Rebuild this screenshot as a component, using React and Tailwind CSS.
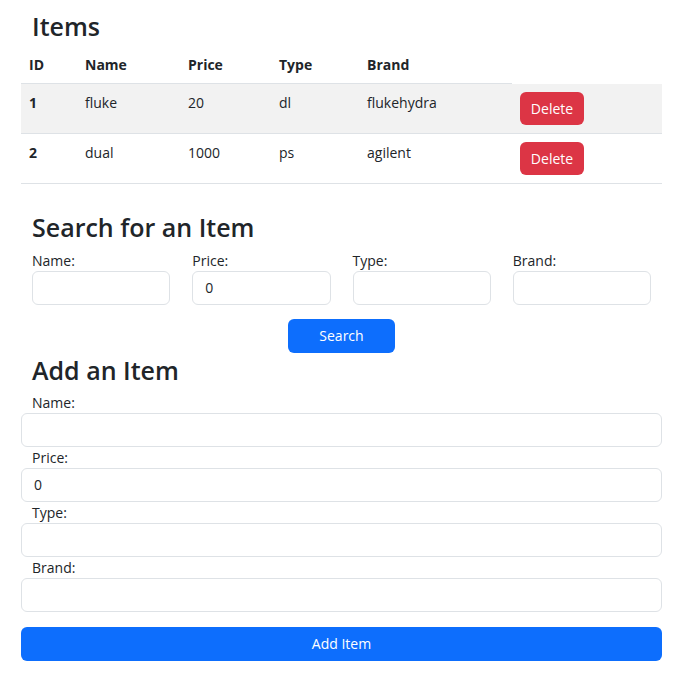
import { useState } from 'react'

const font = { fontFamily: '"Open Sans", "Noto Sans", sans-serif' }

const items = [
  { id: 1, name: 'fluke', price: 20, type: 'dl', brand: 'flukehydra' },
  { id: 2, name: 'dual', price: 1000, type: 'ps', brand: 'agilent' },
]

// ─── Inputs ───────────────────────────────────────────────────────────────────
function Field({ value = '' }) {
  return (
    <input
      type="text"
      defaultValue={value}
      className="block h-[34px] w-full rounded-md border border-[#dee2e6] bg-white px-3 text-[14px] text-[#212529] outline-none"
    />
  )
}

function Heading({ children, className = '' }) {
  return (
    <h2 className={`pl-[11px] text-[25px] font-semibold leading-[31px] text-[#212529] ${className}`}>
      {children}
    </h2>
  )
}

export default function App() {
  const [rows] = useState(items)

  return (
    <div className="min-h-[680px] bg-white px-[21px] pr-[22px] text-[14px] leading-[21px] text-[#212529]" style={font}>
      {/* Items table */}
      <Heading className="pt-[11px]">Items</Heading>
      <table className="mt-[4px] w-full border-collapse text-left">
        <thead>
          <tr>
            <th className="w-[56px] border-b border-[#dee2e6] px-2 py-2 font-bold">ID</th>
            <th className="w-[103px] border-b border-[#dee2e6] px-2 py-2 font-bold">Name</th>
            <th className="w-[91px] border-b border-[#dee2e6] px-2 py-2 font-bold">Price</th>
            <th className="w-[88px] border-b border-[#dee2e6] px-2 py-2 font-bold">Type</th>
            <th className="w-[153px] border-b border-[#dee2e6] px-2 py-2 font-bold">Brand</th>
            <th className="w-[150px]" />
          </tr>
        </thead>
        <tbody>
          {rows.map((r, i) => (
            <tr key={r.id} className={i % 2 === 0 ? 'bg-[#f2f2f2]' : ''}>
              <td className="border-b border-[#dee2e6] px-2 py-2 align-top font-bold">{r.id}</td>
              <td className="border-b border-[#dee2e6] px-2 py-2 align-top">{r.name}</td>
              <td className="border-b border-[#dee2e6] px-2 py-2 align-top">{r.price}</td>
              <td className="border-b border-[#dee2e6] px-2 py-2 align-top">{r.type}</td>
              <td className="border-b border-[#dee2e6] px-2 py-2 align-top">{r.brand}</td>
              <td className="border-b border-[#dee2e6] px-2 py-2 align-top">
                <button className="h-[33px] w-[64px] rounded-md bg-[#dc3545] text-[14px] text-white" style={font}>
                  Delete
                </button>
              </td>
            </tr>
          ))}
        </tbody>
      </table>

      {/* Search */}
      <Heading className="mt-[28px]">Search for an Item</Heading>
      <div className="mt-[7px] grid grid-cols-4">
        {['Name:', 'Price:', 'Type:', 'Brand:'].map((label) => (
          <div key={label} className="px-[11px]">
            <label className="block">{label}</label>
            <Field value={label === 'Price:' ? '0' : ''} />
          </div>
        ))}
      </div>
      <div className="mt-[14px] flex justify-center">
        <button className="h-[34px] w-[107px] rounded-md bg-[#0d6efd] text-[14px] text-white" style={font}>
          Search
        </button>
      </div>

      {/* Add */}
      <Heading className="mt-[2px]">Add an Item</Heading>
      <div className="mt-[6px] flex flex-col">
        {['Name:', 'Price:', 'Type:', 'Brand:'].map((label) => (
          <div key={label}>
            <label className="block pl-[11px]">{label}</label>
            <Field value={label === 'Price:' ? '0' : ''} />
          </div>
        ))}
      </div>
      <button className="mt-[15px] h-[34px] w-full rounded-md bg-[#0d6efd] text-[14px] text-white" style={font}>
        Add Item
      </button>
    </div>
  )
}
